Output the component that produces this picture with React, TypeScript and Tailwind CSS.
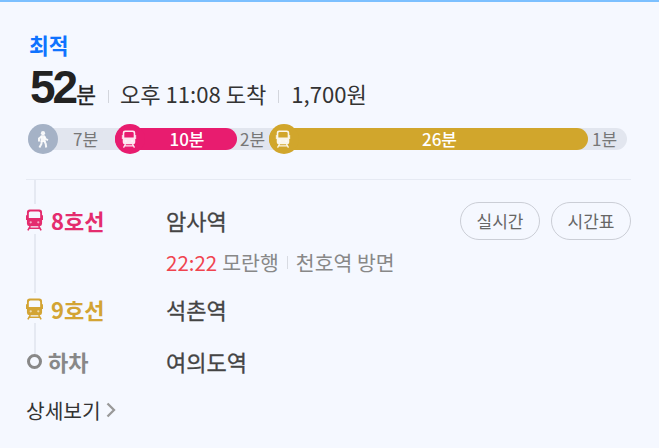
import type { ReactNode } from 'react'
import { clsx } from 'clsx'

interface IconProps {
  className?: string
}

function TrainIcon({ className }: IconProps) {
  return (
    <svg viewBox="0 0 18 23" fill="none" className={className} aria-hidden="true">
      <path
        fillRule="evenodd"
        fill="currentColor"
        d="M4 .5h10a3 3 0 0 1 3 3v12a2.600 2.600 0 0 1-2.600 2.600H3.600A2.600 2.600 0 0 1 1 15.500v-12a3 3 0 0 1 3-3Zm.7 2A1.700 1.700 0 0 0 3 4.200v5.300h12V4.200a1.700 1.700 0 0 0-1.700-1.700H4.700Z"
      />
      <circle cx="5" cy="14" r="1.200" fill="white" fillOpacity=".6" />
      <circle cx="13" cy="14" r="1.200" fill="white" fillOpacity=".6" />
      <path d="M.5 6.500v5M17.500 6.500v5" stroke="currentColor" strokeWidth="1.200" />
      <path d="M4.500 18 2 22.500M13.500 18l2.500 4.500M3.500 20.300h11" stroke="currentColor" strokeWidth="1.700" />
    </svg>
  )
}

function WalkIcon({ className }: IconProps) {
  return (
    <svg viewBox="0 0 12 17" fill="none" className={className} aria-hidden="true">
      <circle cx="6" cy="2.200" r="2.100" fill="currentColor" />
      <path d="M3.800 4.300h4l1 6.700H3.500Z" fill="currentColor" />
      <path
        d="m4.500 5.500-2.500 2v3M7.500 5.500l1.200 2.600 2.300 1M4.800 10l-.4 3-2 3.500M7.200 10l1.500 2.800.5 3.700"
        stroke="currentColor"
        strokeWidth="2"
      />
    </svg>
  )
}

interface RideProps {
  label: string
  colorClass: string
  widthClass: string
}

function RideSegment({ label, colorClass, widthClass }: RideProps) {
  return (
    <div className={clsx('flex h-[22px] items-center rounded-full', colorClass, widthClass)}>
      <div className={clsx('flex size-[30px] shrink-0 items-center justify-center rounded-full pr-[2px]', colorClass)}>
        <TrainIcon className="h-[18px] w-[16px] text-white/90" />
      </div>
      <span className="flex-1 pr-[8px] text-center font-medium text-white">{label}</span>
    </div>
  )
}

function TimelineBar() {
  return (
    <div className="ml-[28px] flex h-[22px] w-[599px] items-center rounded-full bg-[#e2e6ef] text-[17px] leading-[22px] text-[#777]">
      <div className="flex w-[87px] items-center">
        <div className="flex size-[30px] shrink-0 items-center justify-center rounded-full bg-[#a5b2c6]">
          <WalkIcon className="h-[17px] w-[12px] text-white/90" />
        </div>
        <span className="flex-1 pr-[2px] text-center">7분</span>
      </div>
      <RideSegment label="10분" colorClass="bg-[#e81c6f]" widthClass="w-[122px]" />
      <span className="w-[32px] pr-[1px] text-center">2분</span>
      <RideSegment label="26분" colorClass="bg-[#d1a62c]" widthClass="w-[319px]" />
      <span className="flex-1 pr-[6px] text-center">1분</span>
    </div>
  )
}

interface StopProps {
  line: string
  station: string
  colorClass: string
  heightClass: string
  children?: ReactNode
}

function RideStop({ line, station, colorClass, heightClass, children }: StopProps) {
  return (
    <div className={clsx('flex', heightClass)}>
      <div className="flex w-[17px] shrink-0 flex-col items-center">
        <div className="flex h-[30px] items-center pt-[2px]">
          <TrainIcon className={clsx('h-[22px] w-[17px]', colorClass)} />
        </div>
        <div className="w-[2px] flex-1 bg-[#e5e9f2]" />
      </div>
      <span className={clsx('ml-[8px] w-[115px] text-[22px] leading-[32px] font-bold', colorClass)}>{line}</span>
      <div className="flex-1">
        <div className="text-[22px] leading-[32px] text-[#444] [-webkit-text-stroke:0.3px]">{station}</div>
        {children}
      </div>
    </div>
  )
}

function PillButton({ label }: { label: string }) {
  return (
    <button className="h-[38px] w-[80px] rounded-full border border-[#cbced6] text-[17px] leading-[34px] text-[#666]">
      {label}
    </button>
  )
}

export default function App() {
  return (
    <div className="h-[448px] w-[659px] overflow-hidden border-t-2 border-[#7cc0ff] bg-[#f5f8ff] font-['Noto_Sans_CJK_KR','Noto_Sans',sans-serif]">
      <h2 className="mt-[28px] ml-[29px] text-[21.500px] leading-[30px] font-bold text-[#0f73ff]">최적</h2>

      <div className="mt-[4px] mb-[17px] ml-[30px] flex h-[47px] items-baseline text-[22.100px] leading-[47px] text-[#333]">
        <strong className="font-['Liberation_Sans',sans-serif] text-[46px] tracking-[-3px] text-[#222]">52</strong>
        <span className="ml-[1px] text-[21.500px] text-[#222] [-webkit-text-stroke:0.3px]">분</span>
        <span className="mr-[11px] ml-[12px] h-[13px] w-px bg-[#d3d6dd]" />
        <span>오후 11:08 도착</span>
        <span className="mr-[12px] ml-[12px] h-[13px] w-px bg-[#d3d6dd]" />
        <span>1,700원</span>
      </div>

      <TimelineBar />

      <div className="mt-[29px] ml-[26px] w-[605px] border-t border-[#e6eaf3]">
        <div className="ml-[8px] h-[24px] w-[2px] bg-[#e5e9f2]" />
        <ul>
          <li className="relative">
            <RideStop line="8호선" station="암사역" colorClass="text-[#e42c6e]" heightClass="h-[89px]">
              <div className="mt-[10px] flex items-center text-[20.500px] leading-[32px] text-[#888]">
                <span className="text-[#f0444f]">22:22</span>
                <span className="ml-[5px]">모란행</span>
                <span className="mx-[8px] h-[13px] w-px bg-[#d8dbe2]" />
                <span>천호역 방면</span>
              </div>
            </RideStop>
            <div className="absolute top-[-2px] right-0 flex gap-[11px]">
              <PillButton label="실시간" />
              <PillButton label="시간표" />
            </div>
          </li>
          <li>
            <RideStop line="9호선" station="석촌역" colorClass="text-[#d3a434]" heightClass="h-[61px]" />
          </li>
          <li className="flex h-[18px]">
            <div className="ml-[1px] size-[15px] shrink-0 rounded-full border-[3px] border-[#888]" />
            <span className="ml-[6px] w-[118px] text-[22px] leading-[15px] font-bold text-[#888]">하차</span>
            <span className="text-[22px] leading-[15px] text-[#444] [-webkit-text-stroke:0.3px]">여의도역</span>
          </li>
        </ul>
      </div>

      <a className="mt-[22px] ml-[26px] flex items-center text-[20.300px] leading-[32px] text-[#333]">
        상세보기
        <svg viewBox="0 0 10 16" fill="none" className="ml-[5px] h-[16px] w-[10px]" aria-hidden="true">
          <path d="m1.500 1.500 6.500 6.500-6.500 6.500" stroke="#999" strokeWidth="2.300" />
        </svg>
      </a>
    </div>
  )
}
